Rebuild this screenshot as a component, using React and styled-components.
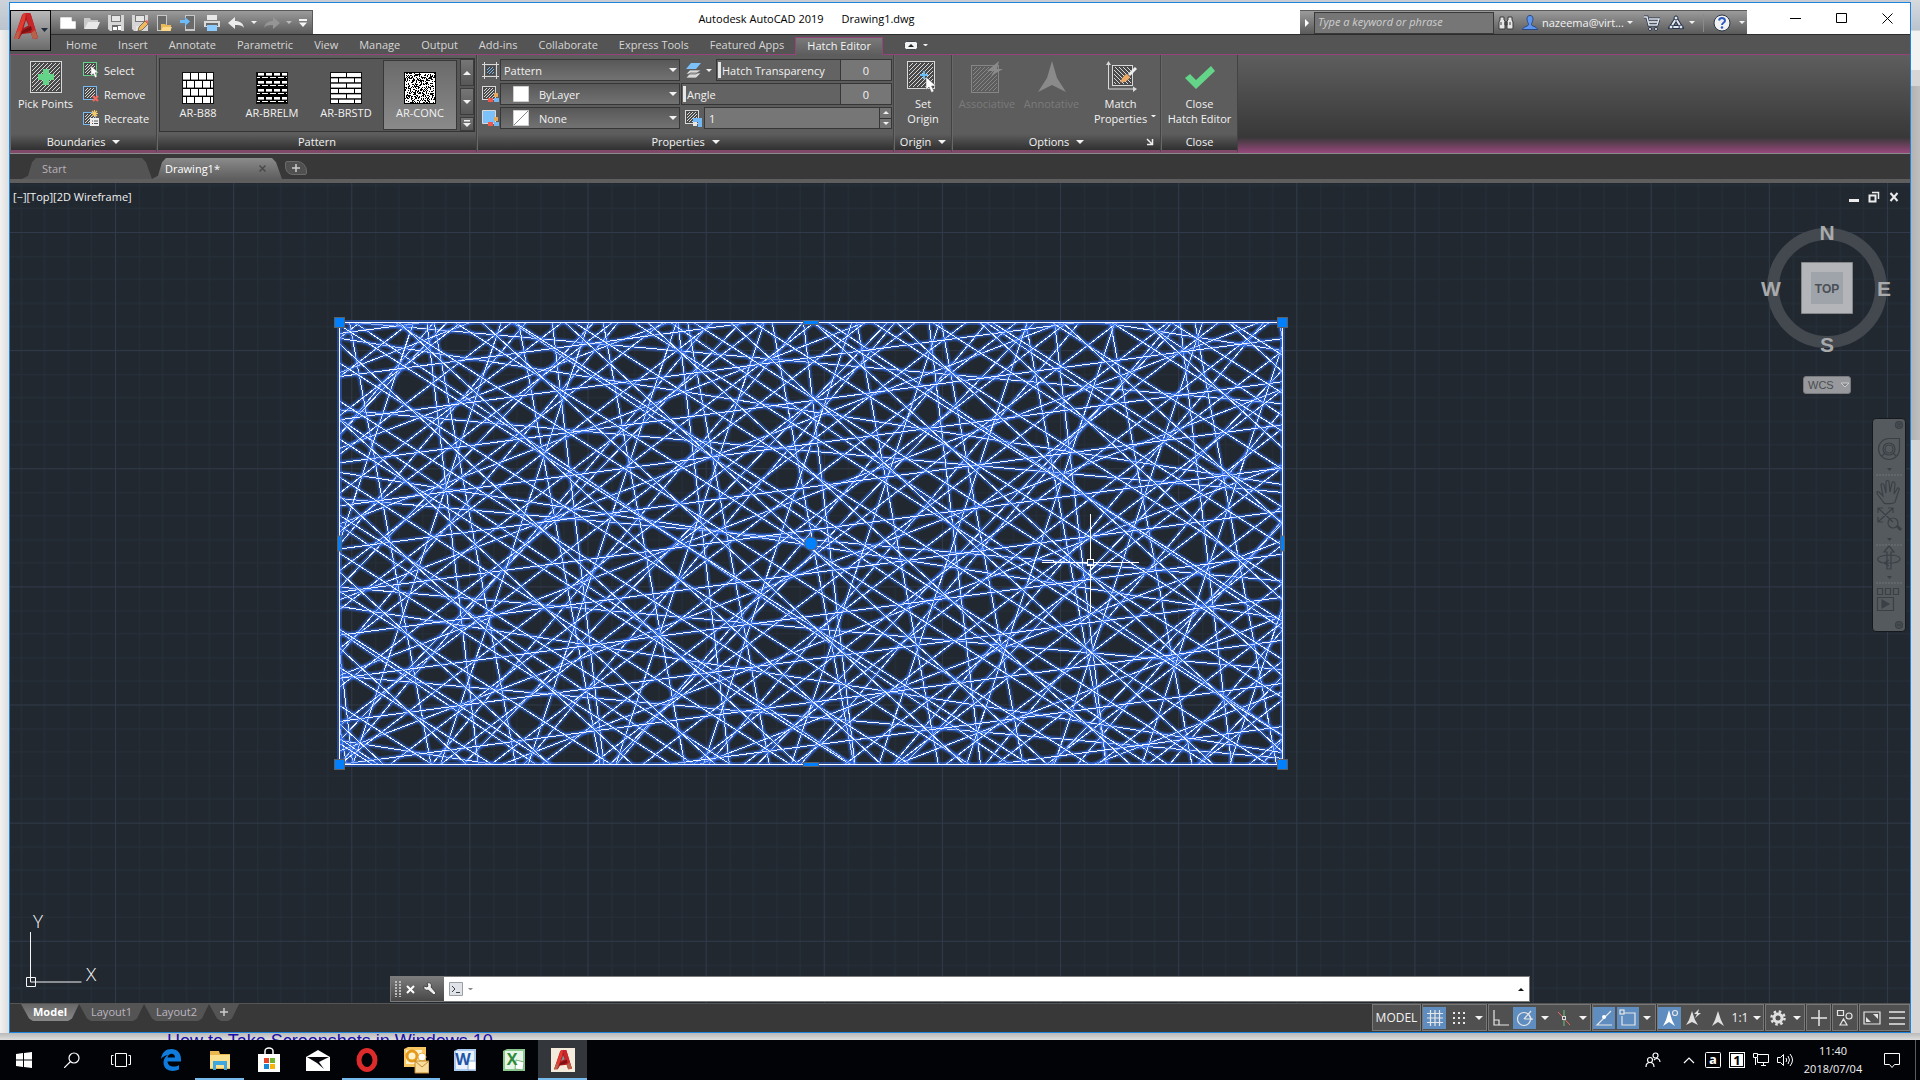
import React from 'react';
import styled, { createGlobalStyle, css } from 'styled-components';

const GlobalStyle = createGlobalStyle`
  * { box-sizing: border-box; }
  body {
    margin: 0;
    overflow: hidden;
    font-family: "Open Sans", "Noto Sans", sans-serif;
    font-size: 11px;
    line-height: 15px;
    color: #f2f2f2;
  }
  button, input, select {
    font: inherit;
    color: inherit;
    margin: 0;
    padding: 0;
    border: 0;
    border-radius: 0;
    background: none;
    outline: none;
  }
  a { color: inherit; text-decoration: none; }
  svg { display: block; flex: none; }
`;

/* ---------- shell ---------- */

const Desktop = styled.div`
  display: flex;
  flex-direction: column;
  height: 100vh;
  padding-top: 2px;
  background:
    linear-gradient(#cdd3d9, #b9c3ce) left top / 10px 30px no-repeat,
    linear-gradient(#d6dade, #b9c3ce) right top / 10px 30px no-repeat,
    linear-gradient(#f2f2f2, #f2f2f2) right 31px / 10px 39px no-repeat,
    linear-gradient(90deg, #b0b0b0, #c0bfc0) right 86px / 10px 354px no-repeat,
    linear-gradient(#c9cdd1, #c9cdd1) left top / 100% 2px no-repeat,
    linear-gradient(90deg, #f1f1f1, #dadada) left top / 10px 100% no-repeat,
    #d6d6d6;
`;

const Window = styled.main`
  display: flex;
  flex: 1;
  flex-direction: column;
  min-height: 0;
  margin: 0 9px;
  border: 1px solid #1c84dc;
  background: #383838;
`;

const PageBehind = styled.div`
  height: 7px;
  padding-left: 167px;
  overflow: hidden;
  background: linear-gradient(#b9b9b9, #dedede);
  font: 18px/20px "Liberation Sans", Arial, sans-serif;
  color: #1a0dab;

  a {
    display: block;
    margin-top: -2px;
  }
`;

/* ---------- title bar ---------- */

const TitleBar = styled.header`
  position: relative;
  display: flex;
  align-items: flex-end;
  height: 32px;
  padding-left: 41px;
  border-bottom: 1px solid #2c2c2c;
  background: #fff;
`;

const AppButton = styled.button`
  position: absolute;
  z-index: 2;
  top: 7px;
  left: 0;
  width: 41px;
  height: 41px;
  border: 1px solid #0a0a0a;
  background: linear-gradient(#b9b9b9, #6b6b6b);
`;

const ToolStrip = styled.div`
  display: flex;
  align-items: center;
  height: 24px;
  border-top: 1px solid #595959;
  background: linear-gradient(#9b9b9b, #5a5a5a);
`;

const QuickTools = styled(ToolStrip)`
  padding: 0 0 0 5px;
  border-right: 1px solid #595959;
`;

const ToolButton = styled.button`
  display: flex;
  align-items: center;
  justify-content: center;
  flex: none;
  width: ${({ $w }) => $w || 24}px;
  height: 100%;
`;

const Title = styled.h1`
  display: flex;
  flex: 1;
  align-self: center;
  justify-content: center;
  gap: 18px;
  margin: 0;
  font-size: 11px;
  font-weight: 400;
  color: #000;
`;

const SearchBox = styled.input`
  width: 180px;
  height: 22px;
  padding: 0 3px 2px;
  border: 1px solid #383838;
  background: #767676;

  &::placeholder {
    font-style: italic;
    color: #cfcfcf;
    opacity: 1;
  }
`;

const UserName = styled.button`
  display: flex;
  align-items: center;
  gap: 3px;
  width: 98px;
`;

const StripDivider = styled.span`
  width: 1px;
  height: 18px;
  margin: 0 3px 0 7px;
  background: #8a8a8a;
`;

const WindowButtons = styled.div`
  display: flex;
  height: 31px;
  margin-left: 26px;
`;

/* ---------- ribbon ---------- */

const RibbonTabs = styled.nav`
  display: flex;
  align-items: flex-end;
  gap: 1px;
  height: 20px;
  padding-left: 46px;
  border-bottom: 1px solid #96437b;
  background: #545454;
`;

const RibbonTab = styled.button`
  height: 18px;
  padding: 0 10px 2px;
  color: #d6d6d6;
  ${({ $active }) => $active && css`
    margin-bottom: -1px;
    padding: 0 11px 2px;
    border: 1px solid #96437b;
    border-bottom: 0;
    background: linear-gradient(#7a7a7a, #5d5d5d);
    color: #f5f5f5;
  `}
`;

const TabsToggle = styled.button`
  display: flex;
  align-items: center;
  gap: 5px;
  height: 18px;
  margin-left: 20px;
`;

const Ribbon = styled.section`
  display: flex;
  height: 99px;
  border-bottom: 1px solid #8b8b8b;
  background: linear-gradient(#5e5e5e, #383838 84%, #98487c);
`;

const PanelBox = styled.section`
  display: flex;
  flex: none;
  flex-direction: column;
  width: ${({ $w }) => $w}px;
  border-right: 1px solid #434343;
  border-left: 1px solid #686868;
  border-bottom: 3px solid #80496a;
  background: #5d5d5d;
`;

const PanelBody = styled.div`
  display: flex;
  flex: 1;
  min-height: 0;
`;

const PanelTitle = styled.h2`
  display: flex;
  height: 16px;
  margin: 0;
  padding-left: ${({ $launcher }) => ($launcher ? 16 : 0)}px;
  background: linear-gradient(#5d5d5d, #303030);
  font-size: 11px;
  font-weight: 400;
  line-height: 16px;

  span {
    display: flex;
    flex: 1;
    align-items: center;
    justify-content: center;
    gap: 7px;
    white-space: nowrap;
  }
`;

const BigButton = styled.button`
  display: flex;
  flex: none;
  flex-direction: column;
  align-items: center;
  gap: 3px;
  width: ${({ $w }) => $w}px;
  padding-top: 6px;
  white-space: nowrap;
  color: ${({ disabled }) => (disabled ? '#7b7b7b' : '#f2f2f2')};

  em {
    position: relative;
    font-style: normal;
  }

  em svg {
    position: absolute;
    right: -9px;
    bottom: 9px;
  }
`;

const SmallStack = styled.div`
  display: flex;
  flex-direction: column;
  padding: 3px 0 0 3px;
`;

const SmallButton = styled.button`
  display: flex;
  align-items: center;
  gap: 5px;
  height: 24px;
`;

const Gallery = styled.div`
  display: flex;
  flex: 1;
  height: 74px;
  margin: 3px 1px;
  padding: 1px;
  border: 1px solid #343434;
  background: #575757;
`;

const Swatch = styled.button`
  display: flex;
  flex-direction: column;
  align-items: center;
  gap: 1px;
  width: 74px;
  height: 70px;
  padding-top: 11px;
  border: 1px solid ${({ $active }) => ($active ? '#383838' : 'transparent')};
  background: ${({ $active }) => ($active ? 'linear-gradient(#6a6a6a, #8a8a8a)' : 'none')};
`;

const GalleryScroll = styled.div`
  display: grid;
  flex: 1;
  grid-template-rows: 27px 27px 1fr;
  gap: 2px;
  margin: -1px -1px -1px 3px;

  button {
    display: grid;
    place-items: center;
    border: 1px solid #3c3c3c;
    background: linear-gradient(#767676, #575757);
  }
`;

const Properties = styled.div`
  display: grid;
  grid-template-columns: 203px 211px;
  grid-template-rows: 23px 23px 23px;
  row-gap: 1px;
  padding-top: 4px;
`;

const Field = styled.div`
  display: flex;
  align-items: center;
  height: 22px;
  padding-left: 4px;
`;

const SelectBox = styled.label`
  position: relative;
  display: flex;
  align-items: center;
  width: 180px;
  height: 22px;
  margin-left: 1px;
  border: 1px solid #363636;
  background: linear-gradient(#585858, #727272);

  select {
    width: 100%;
    height: 100%;
    padding-left: ${({ $swatch }) => ($swatch ? 38 : 3)}px;
    appearance: none;
  }

  svg {
    position: absolute;
    pointer-events: none;
  }
`;

const SliderBox = styled.label`
  display: flex;
  flex: 1;
  align-items: center;
  height: 22px;
  padding-left: 1px;
  border: 1px solid #363636;
  background: #636363;
  white-space: nowrap;

  &::before {
    width: 3px;
    height: 16px;
    margin-right: 1px;
    background: #e6e6e6;
    content: '';
  }

  input {
    width: 51px;
    height: 20px;
    margin-left: auto;
    border-left: 1px solid #363636;
    background: #767676;
    text-align: center;
  }
`;

const ScaleBox = styled.label`
  display: flex;
  flex: 1;
  height: 22px;
  margin-left: 2px;
  border: 1px solid #363636;

  input {
    flex: 1;
    min-width: 0;
    padding-left: 4px;
    background: #767676;
  }
`;

const Spinner = styled.span`
  display: grid;
  width: 12px;
  gap: 1px;
  border-left: 1px solid #363636;
  background: #363636;

  button {
    display: grid;
    place-items: center;
    background: #747474;
  }
`;

/* ---------- file tabs and drawing ---------- */

const FileTabs = styled.nav`
  display: flex;
  align-items: flex-end;
  height: 29px;
  padding-left: 12px;
  border-bottom: 4px solid #5e5e5e;
  background: #383838;
`;

const FileTab = styled.button`
  display: flex;
  align-items: center;
  justify-content: space-between;
  width: 130px;
  height: 21px;
  padding: 0 16px 0 ${({ $active }) => ($active ? 13 : 20)}px;
  clip-path: polygon(0 100%, 6px 85%, 10px 20%, 14px 0, calc(100% - 10px) 0, calc(100% - 6px) 20%, 100% 100%);
  background: ${({ $active }) => ($active ? 'linear-gradient(#8b8b8b, #5e5e5e)' : '#545454')};
  color: ${({ $active }) => ($active ? '#fff' : '#b9b0b9')};
`;

const AddTab = styled.button`
  display: grid;
  place-items: center;
  width: 22px;
  height: 14px;
  margin: 0 0 4px 3px;
  border: 1px solid #6a6a6a;
  border-radius: 2px 10px 2px 8px;
  background: #505050;
`;

const Viewport = styled.section`
  position: relative;
  flex: 1;
  min-height: 0;
  overflow: hidden;
  background: #212830;
`;

const Canvas = styled.svg`
  position: absolute;
  inset: 0;
  width: 100%;
  height: 100%;
`;

const ViewLabel = styled.div`
  position: absolute;
  top: 6px;
  left: 3px;
`;

const ViewButtons = styled.div`
  position: absolute;
  top: 8px;
  right: 10px;
  display: flex;
  gap: 8px;
`;

const ViewCube = styled.div`
  position: absolute;
  top: 35px;
  right: 13px;
  display: flex;
  flex-direction: column;
  align-items: center;
  gap: 18px;
`;

const WcsButton = styled.button`
  display: flex;
  align-items: center;
  gap: 6px;
  width: 48px;
  height: 18px;
  padding-left: 4px;
  border: 1px solid #77797c;
  border-radius: 3px;
  background: #98999c;
  font: 11px/14px "Liberation Sans", Arial, sans-serif;
  color: #4a4d52;
`;

const NavBar = styled.nav`
  position: absolute;
  top: 235px;
  right: 4px;
  width: 34px;
  height: 214px;
  border: 1px solid #15191e;
  border-radius: 4px;
  background: #555a5e;
`;

const UcsIcon = styled.svg`
  position: absolute;
  bottom: 0;
  left: 0;
`;

const CommandLine = styled.div`
  position: absolute;
  bottom: 1px;
  left: 380px;
  display: flex;
  align-items: center;
  width: calc(100% - 760px);
  height: 26px;
  border: 1px solid #7a7a7a;
  background: #fff;

  > input {
    flex: 1;
    height: 24px;
    padding-left: 6px;
    color: #000;
  }
`;

const CommandTools = styled.div`
  display: flex;
  align-items: center;
  width: 53px;
  height: 24px;
  background: linear-gradient(#7c7c7c, #474747);
`;

/* ---------- bottom bar ---------- */

const BottomBar = styled.footer`
  display: flex;
  justify-content: space-between;
  height: 29px;
  border-top: 1px solid #555;
  background: #383838;
`;

const LayoutTabs = styled.nav`
  display: flex;
  padding-left: 11px;
`;

const LayoutTab = styled.button`
  width: ${({ $w }) => $w || 65}px;
  height: 17px;
  padding-bottom: 2px;
  clip-path: polygon(0 0, 100% 0, calc(100% - 7px) 85%, calc(100% - 11px) 100%, 12px 100%, 8px 85%);
  background: ${({ $active }) => ($active ? 'linear-gradient(#666, #888)' : '#545454')};
  color: ${({ $active }) => ($active ? '#fff' : '#bdb6c0')};
  font-weight: ${({ $active }) => ($active ? 700 : 400)};
`;

const StatusBar = styled.div`
  display: flex;
  gap: 1px;
  height: 27px;
`;

const StatusGroup = styled.div`
  display: flex;
  align-items: center;
  width: ${({ $w }) => $w}px;
  border: 1px solid #787878;
  background: #505050;
`;

const StatusButton = styled.button`
  display: flex;
  align-items: center;
  justify-content: center;
  flex: ${({ $w }) => ($w ? 'none' : 1)};
  width: ${({ $w }) => $w}px;
  height: 22px;
  font-size: 12px;
  white-space: nowrap;
  background: ${({ $on }) => ($on ? '#5f8dbf' : 'none')};
`;

const StatusGap = styled.span`
  flex: 1;
`;

/* ---------- taskbar ---------- */

const Taskbar = styled.footer`
  display: flex;
  justify-content: space-between;
  height: 40px;
  background: #010307;
`;

const TaskGroup = styled.div`
  display: flex;
  align-items: center;
`;

const TaskButton = styled.button`
  display: grid;
  place-items: center;
  width: ${({ $w }) => $w || 49}px;
  height: 40px;
  background: ${({ $active }) => ($active ? '#33363b' : 'none')};
  box-shadow: ${({ $open }) => ($open ? 'inset 0 -2px #76b9ed' : 'none')};
`;

const TrayButton = styled.button`
  display: grid;
  place-items: center;
  width: ${({ $w }) => $w || 24}px;
  height: 40px;
`;

const Clock = styled.time`
  width: 72px;
  font-size: 11px;
  line-height: 18px;
  text-align: center;
`;

const ShowDesktop = styled.button`
  width: 5px;
  height: 40px;
  border-left: 1px solid #5a5a5a;
`;

/* ---------- drawings ---------- */

const Svg = ({ w = 16, h = w, box, children, ...rest }) => (
  <svg width={w} height={h} viewBox={box || `0 0 ${w} ${h}`} fill="none" aria-hidden="true" {...rest}>
    {children}
  </svg>
);

const Caret = ({ w = 8, up, color = '#f2f2f2', ...rest }) => (
  <Svg w={w} h={w / 2} {...rest}>
    <path d={up ? `M0 ${w / 2}h${w}L${w / 2} 0z` : `M0 0h${w}L${w / 2} ${w / 2}z`} fill={color} />
  </Svg>
);

const FieldCaret = styled(Caret)`
  right: 2px;
`;

const FieldSwatch = styled(Svg)`
  left: 12px;
`;

const PlusMark = styled(Svg)`
  margin: auto;
`;

// 45 degree strokes inside a square, leaning "/" or, flipped, "\"
const diagonals = (x, y, size, step, flip) => {
  let d = '';
  for (let c = step; c < size * 2; c += step) {
    const a = Math.max(0, c - size);
    const b = Math.min(size, c);
    d += flip
      ? `M${x + size - a} ${y + c - a}L${x + size - b} ${y + c - b}`
      : `M${x + a} ${y + c - a}L${x + b} ${y + c - b}`;
  }
  return d;
};

const HatchBox = ({ x = 0, y = 0, size, step = 4, color = '#d9d9d9', frame = color, fill = '#4a4a4a', flip }) => (
  <g>
    <rect x={x + 0.5} y={y + 0.5} width={size - 1} height={size - 1} fill={fill} stroke={frame} />
    <path d={diagonals(x + 2, y + 2, size - 4, step, flip)} stroke={color} />
  </g>
);

const Pointer = ({ x, y, k = 1 }) => (
  <path
    transform={`translate(${x} ${y}) scale(${k})`}
    d="M0 0v13l3-3 2.500 5.500 2.500-1.200-2.500-5.300h4.500z"
    fill="#fff"
    stroke="#555"
    strokeWidth="0.500"
  />
);

const AutocadLogo = ({ w, h }) => (
  <Svg w={w} h={h} box="0 0 24 27">
    <path d="M0 26L8 2q1-2 4-2h3q2 0 2 2l7 23-5 1-2-6-9 1-3 5z" fill="#a81a1c" />
    <path d="M0 26L9 1l3-1-1 7-6 18z" fill="#e23b32" />
    <path d="M12 0h3q2 0 2 2l7 23-4 1-7-19z" fill="#c9262a" />
    <path d="M8 18l9-5 1 4-11 4z" fill="#7c1113" />
    <path d="M12 7l-2.500 8 5-2.500z" fill="#8e8e8e" />
    <path d="M0 26l3-7 3-1-2 8zM19 26l-2-6 4-3 3 8z" fill="#b5634a" />
  </Svg>
);

const quickIcons = {
  New: <path d="M0 2h12l4 4v8H0zM12 2v4h4" fill="#fff" stroke="#8a8a8a" strokeWidth="0.600" />,
  Open: (
    <g>
      <path d="M0 14V3h6l1 2h7v3H4z" fill="#c9c9c9" />
      <path d="M4 7h12l-3 7H0z" fill="#e8e8e8" />
    </g>
  ),
  Save: (
    <g>
      <path d="M0 0h16v16H2l-2-2z" fill="#d6d6d6" />
      <path d="M3 0h10v7H3z" fill="#777" />
      <path d="M4 1h8v5H4z" fill="#e6e6e6" />
      <path d="M4 10h9v6H4z" fill="#6a6a6a" />
      <path d="M5 12h4v3H5zM10 11h3v4h-3z" fill="#fff" />
    </g>
  ),
  'Save As': (
    <g>
      <path d="M0 0h16v16H2l-2-2z" fill="#d6d6d6" />
      <path d="M3 0h10v7H3z" fill="#777" />
      <path d="M4 1h8v5H4zM4 11h4v5H4z" fill="#e6e6e6" />
      <path d="M7 12l6-6 3 3-6 6-4 1z" fill="#efb95c" stroke="#4a4a4a" strokeWidth="0.700" />
      <path d="M13 6l2-1 2 2-1 2z" fill="#f0685e" />
    </g>
  ),
  'Open from Web & Mobile': (
    <g>
      <rect x="1.500" y="0.500" width="9" height="15" fill="#6a6a6a" stroke="#c8c8c8" />
      <path d="M5 9h4l1 1h5v6H5z" fill="#e9b95a" />
      <path d="M7 12h9l-2 4H5z" fill="#ffd98a" />
    </g>
  ),
  'Save to Web & Mobile': (
    <g>
      <rect x="5.500" y="0.500" width="9" height="15" fill="#6a6a6a" stroke="#c8c8c8" />
      <path d="M6 14h8v2H6z" fill="#c8c8c8" />
      <path d="M0 5h5V2l5 4.500L5 11V8H0z" fill="#6bbcf8" />
    </g>
  ),
  Plot: (
    <g>
      <path d="M3 0h10v5H3z" fill="#e8e8e8" />
      <path d="M0 6h16v6H0z" fill="#dadada" />
      <path d="M2 8h12v3H2z" fill="#6a6a6a" />
      <path d="M3 10h10v6H3z" fill="#8ccbff" />
    </g>
  ),
  Undo: <path d="M0 8l7-6v4c5 0 8 2 9 7-2-3-5-3-9-3v4z" fill="#ececec" />,
};

const StatusGlyph = ({ name }) => {
  const line = { stroke: '#e6e6e6', strokeWidth: 1.2 };
  switch (name) {
    case 'grid':
      return <Svg w={18}><path d="M4.500 1v16M9 1v16M13.500 1v16M1 4.500h16M1 9h16M1 13.500h16" {...line} /></Svg>;
    case 'snap':
      return <Svg w={16}><path d="M2 3h12M2 8h12M2 13h12" {...line} strokeWidth="2" strokeDasharray="2 3" /></Svg>;
    case 'ortho':
      return <Svg w={18}><path d="M2 1v15h15M2 11h5v5" {...line} /></Svg>;
    case 'polar':
      return <Svg w={18}><circle cx="8" cy="10" r="6.500" {...line} /><path d="M8 10h9M8 10l7-8M13 6l3 5" {...line} /></Svg>;
    case 'iso':
      return <Svg w={18}><path d="M9 1v16" stroke="#5fc878" /><path d="M3 3l12 13" stroke="#f06a6a" /><rect x="7.500" y="7.500" width="3" height="3" fill="#505050" stroke="#ddd" /></Svg>;
    case 'track':
      return <Svg w={18}><path d="M16 2L2 16h15" {...line} /><circle cx="9" cy="8" r="2" fill="#fff" /></Svg>;
    case 'osnap':
      return <Svg w={18}><path d="M5 4h11v12H3V7" {...line} /><rect x="1" y="1" width="4" height="4" fill="#5f8dbf" {...line} /></Svg>;
    case 'annoVisible':
      return <Svg w={18}><path d="M8 1l3 10 3 6-6-4-6 4 3-6z" fill="#fff" /><circle cx="14" cy="4" r="2.500" {...line} /></Svg>;
    case 'annoAuto':
      return <Svg w={18}><path d="M7 2l3 9 3 5-6-3-6 3 3-5z" fill="#e0e0e0" /><path d="M14 0l-5 5h3l-2 4 6-5h-3z" fill="#e0e0e0" /></Svg>;
    case 'anno':
      return <Svg w={14} h={16}><path d="M7 1l3 9 3 6-6-4-6 4 3-6z" fill="#e0e0e0" /></Svg>;
    case 'gear':
      return (
        <Svg w={16}>
          <circle cx="8" cy="8" r="4" stroke="#e0e0e0" strokeWidth="3" />
          <circle cx="8" cy="8" r="6.500" stroke="#e0e0e0" strokeWidth="2.500" strokeDasharray="2.500 2.600" />
        </Svg>
      );
    case 'plus':
      return <Svg w={18}><path d="M9 1v16M1 9h16" stroke="#e6e6e6" strokeWidth="1.500" /></Svg>;
    case 'shapes':
      return <Svg w={18}><path d="M1.500 1.500h6v5h-6zM4 16l3.500-6 3.500 6z" {...line} /><circle cx="13" cy="7" r="3" {...line} /></Svg>;
    case 'clean':
      return <Svg w={18}><path d="M1 3h16v12H1z" {...line} /><path d="M10 5h5v5zM3 8v5h5z" fill="#e6e6e6" /></Svg>;
    case 'menu':
      return <Svg w={18}><path d="M1 3h16M1 9h16M1 15h16" stroke="#e6e6e6" strokeWidth="1.500" /></Svg>;
    default:
      return <Caret w={8} />;
  }
};

const Bricks = ({ rows, cols, gap, dark }) => {
  const h = 32 / rows;
  const w = 32 / cols;
  const cells = [];
  for (let r = 0; r < rows; r += 1) {
    const shift = r % 2 ? w / 2 : 0;
    const rh = dark && r % 2 ? h * 0.6 : h;
    for (let c = -1; c <= cols; c += 1) {
      cells.push(
        <rect key={`${r}-${c}`} x={c * w + shift + gap} y={r * h + 1} width={w - gap} height={rh - 1.4} fill="#fff" />
      );
    }
  }
  return (
    <Svg w={32}>
      <rect width="32" height="32" fill="#000" />
      {cells}
      <rect x="0.500" y="0.500" width="31" height="31" stroke="#111" />
    </Svg>
  );
};

const Speckle = () => {
  let seed = 11;
  let d = '';
  for (let y = 1; y < 31; y += 1) {
    for (let x = 1; x < 31; x += 1) {
      seed = (seed * 1103515245 + 12345) % 2147483648;
      if ((seed >> 16) % 100 < 42) d += `M${x} ${y}h1v1h-1z`;
    }
  }
  return (
    <Svg w={32} shapeRendering="crispEdges">
      <rect width="32" height="32" fill="#000" />
      <rect x="1" y="1" width="30" height="30" fill="#fff" />
      <path d={d} fill="#000" />
    </Svg>
  );
};

/* ---------- the hatch itself ---------- */

const BOUNDS = { left: 329.5, top: 139.5, right: 1272.5, bottom: 581.5 };
const UNIT = 11.98; // pixels per pattern unit, measured from the lower left corner

// angle, base x, base y, distance between lines
const CONC = [
  [50, 0, 0, 5.89789472],
  [-5, 0, 0, 7.3723684],
  [100.4514446, 0.5977168, -0.0522934, 6.9397673],
  [46.1842, 0, 2, 8.84684208],
  [96.63555761, 0.88936745, 1.86206693, 10.40965104],
  [-8.81584, 0, 2, 11.0585526],
  [21, 1, 1.5, 5.89789472],
  [-34, 1, 1.5, 7.3723684],
  [71.45144474, 1.49742233, 1.16448394, 6.9397673],
  [37.5, 0, 0, 2.567],
  [7.5, 0, 0, 3.567],
  [-32.5, -2.23, 0, 2.678],
  [-42.5, -3.23, 0, 4.678],
];

const familyPath = ([angle, bx, by, gap]) => {
  const t = (angle * Math.PI) / 180;
  const dir = { x: Math.cos(t), y: Math.sin(t) };
  const normal = { x: -dir.y, y: dir.x };
  const corners = [
    [BOUNDS.left, BOUNDS.top],
    [BOUNDS.right, BOUNDS.top],
    [BOUNDS.left, BOUNDS.bottom],
    [BOUNDS.right, BOUNDS.bottom],
  ].map(([px, py]) => {
    const x = (px - BOUNDS.left) / UNIT - bx;
    const y = (BOUNDS.bottom - py) / UNIT - by;
    return (x * normal.x + y * normal.y) / gap;
  });
  let d = '';
  for (let k = Math.ceil(Math.min(...corners)); k <= Math.max(...corners); k += 1) {
    const x = bx + normal.x * gap * k;
    const y = by + normal.y * gap * k;
    const at = (s) => `${(BOUNDS.left + (x + dir.x * s) * UNIT).toFixed(1)} ${(BOUNDS.bottom - (y + dir.y * s) * UNIT).toFixed(1)}`;
    d += `M${at(-150)}L${at(150)}`;
  }
  return d;
};

const FAMILIES = CONC.map(familyPath);

const Drawing = () => {
  const { left, top, right, bottom } = BOUNDS;
  const frame = { x: left, y: top, width: right - left, height: bottom - top };
  const cx = (left + right) / 2;
  const cy = (top + bottom) / 2;
  const minor = [24, 47, 71, 94];
  const grip = { fill: '#0080ff', stroke: '#5b6068' };
  return (
    <Canvas aria-label="Drawing1">
      <defs>
        <pattern id="grid" x="105" y="49" width="118.130" height="118.130" patternUnits="userSpaceOnUse">
          {minor.map((m) => (
            <path key={m} d={`M${m + 0.5} 0V119M0 ${m + 0.5}H119`} stroke="#262f3a" />
          ))}
          <path d="M0.500 0V119M0 0.500H119" stroke="#313a4a" />
        </pattern>
        <clipPath id="bounds">
          <rect {...frame} />
        </clipPath>
      </defs>
      <rect width="100%" height="100%" fill="url(#grid)" />
      <g clipPath="url(#bounds)" fill="none">
        {FAMILIES.map((d) => (
          <g key={d}>
            <path d={d} stroke="#2f6cf0" strokeWidth="6" strokeOpacity="0.250" />
            <path d={d} stroke="#3573f6" strokeWidth="3" strokeOpacity="0.500" />
            <path d={d} stroke="#f2f6ff" strokeWidth="1" shapeRendering="crispEdges" />
          </g>
        ))}
      </g>
      <rect {...frame} fill="none" stroke="#2f6cf0" strokeWidth="5" strokeOpacity="0.500" />
      <rect {...frame} fill="none" stroke="#fff" />
      {[[left, top], [right, top], [left, bottom], [right, bottom]].map(([x, y]) => (
        <rect key={`${x}-${y}`} x={x - 5} y={y - 5} width="10" height="10" {...grip} />
      ))}
      {[top, bottom].map((y) => (
        <rect key={y} x={cx - 7.5} y={y - 2} width="15" height="4" {...grip} />
      ))}
      {[left, right].map((x) => (
        <rect key={x} x={x - 2} y={cy - 7.5} width="4" height="15" {...grip} />
      ))}
      <circle cx={cx} cy={cy} r="6.500" {...grip} />
      <path d="M1080.500 331v46M1080.500 383v46M1032 379.500h45M1084 379.500h45" stroke="#fff" />
      <rect x="1077.500" y="376.500" width="6" height="6" fill="none" stroke="#fff" />
    </Canvas>
  );
};

/* ---------- page parts ---------- */

const Panel = ({ w, title, menu, launcher, children }) => (
  <PanelBox $w={w}>
    <PanelBody>{children}</PanelBody>
    <PanelTitle $launcher={launcher}>
      <span>
        {title}
        {menu && <Caret w={8} />}
      </span>
      {launcher && (
        <Svg w={16}><path d="M3 5l5 5M8.500 5v5.500H3" stroke="#eee" strokeWidth="1.500" /></Svg>
      )}
    </PanelTitle>
  </PanelBox>
);

const tabs = ['Home', 'Insert', 'Annotate', 'Parametric', 'View', 'Manage', 'Output', 'Add-ins', 'Collaborate', 'Express Tools', 'Featured Apps', 'Hatch Editor'];

const statusGroups = [
  { w: 49, items: [{ text: 'MODEL' }] },
  { w: 65, items: [{ icon: 'grid', on: true, w: 23 }, { icon: 'snap', w: 26 }, { icon: 'more' }] },
  { w: 103, items: [{ icon: 'ortho', w: 24 }, { icon: 'polar', on: true, w: 23 }, { icon: 'more', w: 17 }, { icon: 'iso', w: 22 }, { icon: 'more' }] },
  { w: 64, items: [{ icon: 'track', on: true, w: 22 }, { icon: 'gap' }, { icon: 'osnap', on: true, w: 22 }, { icon: 'more', w: 16 }] },
  { w: 107, items: [{ icon: 'annoVisible', on: true, w: 23 }, { icon: 'annoAuto', w: 25 }, { icon: 'anno', w: 23 }, { text: '1:1', w: 22 }, { icon: 'more' }] },
  { w: 40, items: [{ icon: 'gear', w: 24 }, { icon: 'more' }] },
  { w: 25, items: [{ icon: 'plus' }] },
  { w: 26, items: [{ icon: 'shapes' }] },
  { w: 51, items: [{ icon: 'clean' }, { icon: 'menu' }] },
];

const TitleRow = () => (
  <TitleBar>
    <AppButton aria-label="Application menu">
      <Svg w={39} h={39}>
        <g transform="translate(3 2)"><AutocadLogo w={24} h={27} /></g>
        <path d="M30 17h7l-3.500 4z" fill="#1f2c3c" />
      </Svg>
    </AppButton>
    <QuickTools>
      {Object.entries(quickIcons).map(([name, art]) => (
        <ToolButton key={name} aria-label={name}>
          <Svg w={16}>{art}</Svg>
        </ToolButton>
      ))}
      <ToolButton $w={12} aria-label="Undo list"><Caret w={6} /></ToolButton>
      <ToolButton aria-label="Redo">
        <Svg w={16}><path d="M16 8L9 2v4C4 6 1 8 0 13c2-3 5-3 9-3v4z" fill="#959595" /></Svg>
      </ToolButton>
      <ToolButton $w={10} aria-label="Redo list"><Caret w={6} color="#bbb" /></ToolButton>
      <ToolButton $w={18} aria-label="Customize toolbar">
        <Svg w={10} h={8}><path d="M1 0h8v2H1zM1 3.500h8L5 8z" fill="#f5f5f5" /></Svg>
      </ToolButton>
    </QuickTools>
    <Title>
      <span>Autodesk AutoCAD 2019</span>
      <span>Drawing1.dwg</span>
    </Title>
    <ToolStrip>
      <ToolButton $w={14} aria-label="Collapse search">
        <Svg w={4} h={8}><path d="M0 0l4 4-4 4z" fill="#fff" /></Svg>
      </ToolButton>
      <SearchBox aria-label="Search" placeholder="Type a keyword or phrase" />
      <ToolButton aria-label="Find">
        <Svg w={16}>
          <path d="M2 2h4v3l1 1v8H1V7l1-2zM10 2h4v3l1 2v7H9V6l1-1z" fill="#e6e6e6" stroke="#3a3a3a" />
          <path d="M3 7v3M12 7v3M7 7h2v3H7z" stroke="#3a3a3a" />
        </Svg>
      </ToolButton>
      <ToolButton aria-label="Account">
        <Svg w={16}>
          <path d="M8 .500c3 0 3.500 3 2.500 6-.500 1.500-1 2-1 3 0 2 5 1.500 6 5H.500c1-3.500 6-3 6-5 0-1-.500-1.500-1-3-1-3-.500-6 2.500-6z" fill="#5c95f0" stroke="#27457f" />
        </Svg>
      </ToolButton>
      <UserName>nazeema@virt... <Caret w={6} /></UserName>
      <ToolButton aria-label="App store">
        <Svg w={16}>
          <path d="M0 2h3l2 8h8l2-6H5" stroke="#26324a" strokeWidth="3" />
          <path d="M0 2h3l2 8h8l2-6H5M5 7h9" stroke="#e3e8f0" strokeWidth="1.500" />
          <circle cx="6" cy="14" r="1.500" fill="#fff" stroke="#26324a" />
          <circle cx="12" cy="14" r="1.500" fill="#fff" stroke="#26324a" />
        </Svg>
      </ToolButton>
      <ToolButton aria-label="Stay connected">
        <Svg w={16}>
          <path d="M8 4l5 8H3z" stroke="#26324a" strokeWidth="4" />
          <path d="M8 4l5 8H3z" stroke="#e3e8f0" strokeWidth="2" />
          <g fill="#e3e8f0" stroke="#26324a"><circle cx="8" cy="3" r="2" /><circle cx="3" cy="12" r="2" /><circle cx="13" cy="12" r="2" /></g>
        </Svg>
      </ToolButton>
      <ToolButton $w={8} aria-label="Stay connected list"><Caret w={6} /></ToolButton>
      <StripDivider />
      <ToolButton $w={29} aria-label="Help">
        <Svg w={18}>
          <circle cx="9" cy="9" r="8" fill="#f1f1f1" stroke="#2b3442" />
          <path d="M6 6.500Q6.500 4 9 4t3 2.500C12 9 9 8.500 9 11" stroke="#2d5ac0" strokeWidth="2" />
          <circle cx="9" cy="13.500" r="1.300" fill="#2d5ac0" />
        </Svg>
      </ToolButton>
      <ToolButton $w={11} aria-label="Help list"><Caret w={6} /></ToolButton>
    </ToolStrip>
    <WindowButtons>
      <ToolButton $w={45} aria-label="Minimize"><Svg w={11}><path d="M0 5.500h11" stroke="#000" /></Svg></ToolButton>
      <ToolButton $w={46} aria-label="Maximize"><Svg w={11}><path d="M.5.500h10v9H.5z" stroke="#000" /></Svg></ToolButton>
      <ToolButton $w={46} aria-label="Close"><Svg w={11}><path d="M.5.500l10 10M10.500.500l-10 10" stroke="#000" /></Svg></ToolButton>
    </WindowButtons>
  </TitleBar>
);

const PropertiesPanel = () => (
  <Panel w={417} title="Properties" menu>
    <Properties>
      <Field>
        <Svg w={17}>
          <HatchBox x={3} y={3} size={11} step={3} color="#79b9f2" frame="#5d5d5d" />
          <path d="M0 2.500h17M0 14.500h17M2.500 0v17M14.500 0v17" stroke="#d9d9d9" />
        </Svg>
        <SelectBox>
          <select aria-label="Hatch type"><option>Pattern</option></select>
          <FieldCaret w={8} />
        </SelectBox>
      </Field>
      <Field>
        <Svg w={17}>
          <path d="M5 11h11l-5 5H1zM5 8h11l-5 4H1z" fill="#d9d9d9" stroke="#5d5d5d" strokeWidth="0.700" />
          <path d="M6 1h10l-5 6H1z" fill="#7cc1fa" />
        </Svg>
        <ToolButton $w={14} aria-label="Layers"><Caret w={6} /></ToolButton>
        <SliderBox>
          Hatch Transparency
          <input defaultValue="0" />
        </SliderBox>
      </Field>
      <Field>
        <Svg w={17}>
          <HatchBox size={14} step={3} />
          <path d="M12 7h4v4h-4z" fill="#e8a85a" />
          <path d="M6 12h5v4H6z" fill="#f0584e" />
          <path d="M12 12h5v4h-5z" fill="#72b8f5" />
        </Svg>
        <SelectBox $swatch>
          <select aria-label="Hatch color"><option>ByLayer</option></select>
          <FieldSwatch w={16}><path d="M.5.500h15v15H.5z" fill="#fff" stroke="#cfcfcf" /></FieldSwatch>
          <FieldCaret w={8} />
        </SelectBox>
      </Field>
      <SliderBox>
        Angle
        <input defaultValue="0" />
      </SliderBox>
      <Field>
        <Svg w={17}>
          <path d="M.500.500h13v13H.5z" fill="#7cc1fa" stroke="#d9d9d9" />
          <path d="M12 7h4v4h-4z" fill="#e8a85a" />
          <path d="M6 12h5v4H6z" fill="#f0584e" />
          <path d="M12 12h5v4h-5z" fill="#72b8f5" />
        </Svg>
        <SelectBox $swatch>
          <select aria-label="Background color"><option>None</option></select>
          <FieldSwatch w={16}>
            <path d="M.5.500h15v15H.5z" fill="#fff" stroke="#cfcfcf" />
            <path d="M1 15L15 1" stroke="#888" />
          </FieldSwatch>
          <FieldCaret w={8} />
        </SelectBox>
      </Field>
      <Field>
        <Svg w={17}>
          <HatchBox size={14} step={3} />
          <path d="M8 8h9v9h-4v-5H8z" fill="#72b8f5" />
          <path d="M8 12h4v4H8z" fill="#e6e6e6" />
        </Svg>
        <ScaleBox>
          <input aria-label="Hatch scale" defaultValue="1" />
          <Spinner>
            <button aria-label="Increase"><Caret w={6} up /></button>
            <button aria-label="Decrease"><Caret w={6} /></button>
          </Spinner>
        </ScaleBox>
      </Field>
    </Properties>
  </Panel>
);

const RibbonRow = () => (
  <Ribbon>
    <Panel w={147} title="Boundaries" menu>
      <BigButton $w={69}>
        <Svg w={32}>
          <HatchBox size={32} />
          <path d="M13 8h6v5h5v6h-5v5h-6v-5H8v-6h5z" fill="#64d489" />
        </Svg>
        Pick Points
      </BigButton>
      <SmallStack>
        <SmallButton>
          <Svg w={16}><HatchBox size={14} step={3} frame="#64d489" /><Pointer x={8} y={4} k={0.75} /></Svg>
          Select
        </SmallButton>
        <SmallButton>
          <Svg w={16}><HatchBox size={14} step={3} frame="#79b9f2" /><path d="M10 10l5 5M15 10l-5 5" stroke="#f0685e" strokeWidth="2.200" /></Svg>
          Remove
        </SmallButton>
        <SmallButton>
          <Svg w={16}>
            <HatchBox y={2} size={13} step={3} frame="#79b9f2" />
            <path d="M11.500 0v7M8 3.500h7M9 1l5 5M14 1L9 6" stroke="#f5c86a" strokeWidth="1.200" />
            <path d="M7 8h9v8H7z" fill="#ececec" />
            <path d="M9 11h1M11 11h4M9 13.500h1M11 13.500h4" stroke="#555" />
          </Svg>
          Recreate
        </SmallButton>
      </SmallStack>
    </Panel>
    <Panel w={320} title="Pattern">
      <Gallery>
        <Swatch><Bricks rows={4} cols={4} gap={1} />AR-B88</Swatch>
        <Swatch><Bricks rows={8} cols={4} gap={2} dark />AR-BRELM</Swatch>
        <Swatch><Bricks rows={6} cols={2} gap={1} />AR-BRSTD</Swatch>
        <Swatch $active><Speckle />AR-CONC</Swatch>
        <GalleryScroll>
          <button aria-label="Scroll up"><Caret w={8} up /></button>
          <button aria-label="Scroll down"><Caret w={8} /></button>
          <button aria-label="Expand gallery">
            <Svg w={8} h={8}><path d="M1 0h6v1.500H1zM0 3h8L4 7z" fill="#eee" /></Svg>
          </button>
        </GalleryScroll>
      </Gallery>
    </Panel>
    <PropertiesPanel />
    <Panel w={58} title="Origin" menu>
      <BigButton $w={56}>
        <Svg w={32}>
          <HatchBox size={28} />
          <path d="M17 10v8M13 14h8" stroke="#6cbcf5" strokeWidth="2" />
          <Pointer x={19} y={16} />
        </Svg>
        <em>Set<br />Origin</em>
      </BigButton>
    </Panel>
    <Panel w={209} title="Options" menu launcher>
      <BigButton $w={68} disabled>
        <Svg w={32}>
          <HatchBox y={4} size={28} color="#868686" fill="#5d5d5d" />
          <path d="M28 0L16 10h7l-3 5 12-7h-6z" fill="#8a8a8a" />
        </Svg>
        Associative
      </BigButton>
      <BigButton $w={61} disabled>
        <Svg w={32}><path d="M16 0l5 17 9 14-14-7-14 7 9-14z" fill="#8a8a8a" /></Svg>
        Annotative
      </BigButton>
      <BigButton $w={77}>
        <Svg w={32}>
          <path d="M3.500 2v26H30" stroke="#d9d9d9" />
          <path d="M1 4l2.500-4L6 4zM28 25.500l4 2.500-4 3z" fill="#d9d9d9" />
          <HatchBox x={7} y={4} size={21} flip />
          <path d="M15 21c2-2 3-7 7-8l3 3c-2 4-6 6-10 5z" fill="#eaa968" />
          <path d="M24 14l7-7" stroke="#eee" strokeWidth="3" />
        </Svg>
        <em>Match<br />Properties<Caret w={5} /></em>
      </BigButton>
    </Panel>
    <Panel w={77} title="Close">
      <BigButton $w={75}>
        <Svg w={32}><path d="M1 17l5-4 6 6L27 5l4 5-19 18z" fill="#64d489" /></Svg>
        <em>Close<br />Hatch Editor</em>
      </BigButton>
    </Panel>
  </Ribbon>
);

const Cube = () => (
  <ViewCube>
    <Svg w={140} h={140} fontFamily="Liberation Sans, Arial, sans-serif" fontWeight="700" textAnchor="middle">
      <circle cx="70" cy="70" r="54" stroke="#44494f" strokeWidth="12" />
      <g fontSize="21" fill="#a9aaac">
        <text x="70" y="22">N</text>
        <text x="70" y="134">S</text>
        <text x="14" y="78">W</text>
        <text x="127" y="78">E</text>
      </g>
      <path d="M44.500 44.500h51v51h-51z" fill="#b4b5b8" stroke="#85868a" />
      <path d="M54 54h32v32H54z" fill="#9fa4ab" />
      <text x="70" y="75" fontSize="12" fill="#4c4f55">TOP</text>
    </Svg>
    <WcsButton>
      WCS
      <Svg w={10} h={6}><path d="M1 1h8L5 5z" stroke="#c9cacc" fill="#83868c" /></Svg>
    </WcsButton>
  </ViewCube>
);

const Navigation = () => (
  <NavBar aria-label="Navigation bar">
    <Svg w={32} h={212} stroke="#3a4046" strokeWidth="1.200">
      <circle cx="26" cy="6" r="3.500" fill="#474c51" />
      <path d="M24.500 4.500l3 3M27.500 4.500l-3 3" />
      <path d="M16 19.500h10.500V30a10.500 10.500 0 1 1-10.500-10.500z" />
      <circle cx="16" cy="30" r="6" />
      <circle cx="16" cy="30" r="4" />
      <path d="M9 37l3-3M23 37l-3-3" />
      <path d="M14 49h5l-2.500 3zM14 119h5l-2.500 3zM14 157h5l-2.500 3z" fill="#3a4046" stroke="none" />
      <path d="M3 56h26M3 126h26M3 164h26" stroke="#7c8185" strokeDasharray="2 1" strokeWidth="0.700" />
      <path d="M11 84l-6-8c-2-3-1-4 1-3l4 4-2-11c0-2 2-2 3 0l2 8 0-11c0-2 3-2 3 0l1 10 2-9c1-2 3-1 3 1l-1 10 3-5c1-2 3-1 2 1l-4 12c-1 2-10 2-11 1z" />
      <path d="M5 89l15 14M20 89L5 103M5 94v-5h5M20 94v-5h-5M5 98v5h5" />
      <circle cx="20" cy="104" r="5" />
      <path d="M24 107l4 4" strokeWidth="3" />
      <path d="M14 150v-17h-3l5-6 5 6h-3v17z" />
      <path d="M10 144c-8-2-8-7 6-8 14 0 14 7 4 8h-8m4-3l-5 3 5 3" />
      <path d="M4.500 169.500h5v6h-5zM12.500 169.500h5v6h-5zM20.500 169.500h5v6h-5zM4.500 178.500h16v13h-16z" />
      <path d="M9 181v8l7-4z" fill="#3a4046" />
      <circle cx="26" cy="206" r="3.500" fill="#474c51" />
      <path d="M24 206h4" />
    </Svg>
  </NavBar>
);

const TaskIcon = ({ name }) => {
  switch (name) {
    case 'Start':
      return <Svg w={16}><path d="M0 2l7-1v6.500H0zM8 1l8-1v7.500H8zM0 8.500h7V15l-7-1zM8 8.500h8V16l-8-1z" fill="#fff" /></Svg>;
    case 'Search':
      return <Svg w={16}><circle cx="10" cy="6" r="5" stroke="#fff" strokeWidth="1.200" /><path d="M6.500 9.500L0 16" stroke="#fff" strokeWidth="1.200" /></Svg>;
    case 'Task View':
      return <Svg w={20} h={16}><path d="M4.500 1.500h11v13h-11zM2.500 3.500h-2v9h2M17.500 3.500h2v9h-2" stroke="#fff" /></Svg>;
    case 'Edge':
      return <Svg w={20} h={22}><path d="M0 10C1 3 5 0 10.500 0 16 0 20 4 20 10v2.500H6.500c.5 6 8 6 11.500 3.500v4.500C12 23.500 2.500 22 2.500 13.500 2.500 10 4.500 7.500 7 6 4 6.500 1.500 8 0 10zm6.500-1.500h7.500C14 3 7 4 6.500 8.500z" fill="#0f7bdc" /></Svg>;
    case 'File Explorer':
      return <Svg w={22} h={20}><path d="M1 1h9l1 3h10v15H1z" fill="#e9b94f" /><path d="M1 5h20v13H1z" fill="#fbe08f" /><path d="M4 11h14v9h-3v-5H7v5H4z" fill="#3fa7e0" /></Svg>;
    case 'Store':
      return <Svg w={22} h={26}><path d="M7 8V4a4 3 0 0 1 8 0v4" stroke="#fff" strokeWidth="1.500" /><path d="M0 7h22v18H0z" fill="#fff" /><path d="M6 11h5v5H6z" fill="#e8452c" /><path d="M12 11h5v5h-5z" fill="#6cb52d" /><path d="M6 17h5v5H6z" fill="#1a8ad6" /><path d="M12 17h5v5h-5z" fill="#f7b50c" /></Svg>;
    case 'Mail':
      return <Svg w={24} h={21}><path d="M0 7l12-7 12 7v14H0z" fill="#fff" /><path d="M1 7h22l-10 5 5 7-7-6z" fill="#05070b" /></Svg>;
    case 'Opera':
      return <Svg w={22} h={24}><ellipse cx="11" cy="12" rx="8" ry="9.500" stroke="#dd2a2a" strokeWidth="5" /></Svg>;
    case 'Outlook':
      return <Svg w={26} h={28}><path d="M1 3l4-2h18v20H1z" fill="#f7c764" /><path d="M3 4h16v14H3z" fill="#fff3cf" /><circle cx="9" cy="10" r="5" stroke="#e59a1c" strokeWidth="3" /><circle cx="19" cy="11" r="4" fill="#fff" stroke="#e8ae46" /><path d="M12 15h14v12H12z" fill="#f9dd9f" stroke="#c58a2d" /><path d="M12 15l7 6 7-6" stroke="#c58a2d" /></Svg>;
    case 'Word':
      return <Svg w={22} h={22}><path d="M0 2l4-2h18v22H0z" fill="#a9c9ee" /><path d="M2 2h18v18H2z" fill="#eaf3fd" /><path d="M14 12h8v9h-8z" fill="#fff" stroke="#89a8cf" /><text x="9" y="16" fontSize="16" fontWeight="700" textAnchor="middle" fill="#1f56a8">W</text></Svg>;
    case 'Excel':
      return <Svg w={22} h={22}><path d="M0 2l4-2h18v22H0z" fill="#8ac88f" /><path d="M2 2h18v18H2z" fill="#e6f5e6" /><path d="M13 11l8 2-1 8-8-1z" fill="#fff" stroke="#7ab27a" /><text x="9" y="16" fontSize="16" fontWeight="700" textAnchor="middle" fill="#2f8a3c">X</text></Svg>;
    default:
      return <Svg w={24}><path d="M0 0h24v24H0z" fill="#f3ebdc" /><g transform="translate(3 2)"><AutocadLogo w={18} h={20} /></g></Svg>;
  }
};

const tasks = [
  { name: 'Start', w: 48 },
  { name: 'Search', w: 48 },
  { name: 'Task View', w: 50 },
  { name: 'Edge' },
  { name: 'File Explorer', open: true },
  { name: 'Store' },
  { name: 'Mail' },
  { name: 'Opera', open: true },
  { name: 'Outlook', open: true },
  { name: 'Word' },
  { name: 'Excel' },
  { name: 'AutoCAD', open: true, active: true },
];

const App = () => (
  <Desktop>
    <GlobalStyle />
    <Window>
      <TitleRow />
      <RibbonTabs>
        {tabs.map((name) => (
          <RibbonTab key={name} $active={name === 'Hatch Editor'}>{name}</RibbonTab>
        ))}
        <TabsToggle aria-label="Minimize ribbon">
          <Svg w={14} h={9}>
            <rect x="0.500" y="0.500" width="13" height="8" rx="2" fill="#f2f2f2" stroke="#3f464e" />
            <path d="M4 6h6L7 3z" fill="#222" />
          </Svg>
          <Caret w={5} />
        </TabsToggle>
      </RibbonTabs>
      <RibbonRow />
      <FileTabs>
        <FileTab>Start</FileTab>
        <FileTab $active>
          Drawing1*
          <Svg w={7}><path d="M.5.500l6 6M6.500.500l-6 6" stroke="#4a4a4a" strokeWidth="1.500" /></Svg>
        </FileTab>
        <AddTab aria-label="New drawing"><Svg w={8}><path d="M4 0v8M0 4h8" stroke="#ccc" strokeWidth="1.500" /></Svg></AddTab>
      </FileTabs>
      <Viewport>
        <Drawing />
        <ViewLabel>[−][Top][2D Wireframe]</ViewLabel>
        <ViewButtons>
          <button aria-label="Minimize drawing"><Svg w={12}><path d="M1 8h10v3H1z" fill="#ececec" /></Svg></button>
          <button aria-label="Restore drawing"><Svg w={12}><path d="M1.500 4.500h6v6h-6z" stroke="#ececec" strokeWidth="2" /><path d="M4 1.500h6.500V8" stroke="#ececec" strokeWidth="1.500" /></Svg></button>
          <button aria-label="Close drawing"><Svg w={12}><path d="M2.500 2l7 8M9.500 2l-7 8" stroke="#ececec" strokeWidth="2" /></Svg></button>
        </ViewButtons>
        <Cube />
        <Navigation />
        <UcsIcon width="100" height="100" fill="none" stroke="#f5f5f5">
          <path d="M20.500 29v50h51" />
          <path d="M16.500 74.500h9v9h-9z" />
          <g stroke="none" fill="#f5f5f5" fontSize="19" fontWeight="300" textAnchor="middle">
            <text x="28" y="25">Y</text>
            <text x="81" y="78">X</text>
          </g>
        </UcsIcon>
        <CommandLine>
          <CommandTools>
            <Svg w={14} h={18}><path d="M5 1v16M9 1v16" stroke="#bbb" strokeWidth="2" strokeDasharray="2 1" /></Svg>
            <ToolButton $w={10} aria-label="Close command line"><Svg w={9}><path d="M1 1l7 7M8 1L1 8" stroke="#fff" strokeWidth="2" /></Svg></ToolButton>
            <ToolButton $w={29} aria-label="Customize">
              <Svg w={14}><path d="M1 4l3 1 1-1-1-3c4-1 5 2 4 4l5 6-2 2-6-5C3 9 0 7 1 4z" fill="#eee" stroke="#222" strokeWidth="0.700" /></Svg>
            </ToolButton>
          </CommandTools>
          <ToolButton aria-label="Recent commands">
            <Svg w={14}><path d="M.5.500h13v13H.5z" fill="#dfe3e8" stroke="#9a9fa6" /><path d="M3 4l3 3-3 3M7 10.500h4" stroke="#3a4048" /></Svg>
          </ToolButton>
          <Caret w={5} color="#8a8a8a" />
          <input aria-label="Command" />
          <ToolButton $w={16} aria-label="Command history"><Caret w={6} up color="#111" /></ToolButton>
        </CommandLine>
      </Viewport>
      <BottomBar>
        <LayoutTabs>
          <LayoutTab $w={58} $active>Model</LayoutTab>
          <LayoutTab>Layout1</LayoutTab>
          <LayoutTab>Layout2</LayoutTab>
          <LayoutTab $w={30} aria-label="New layout">
            <PlusMark w={8}><path d="M4 0v8M0 4h8" stroke="#ccc" strokeWidth="1.500" /></PlusMark>
          </LayoutTab>
        </LayoutTabs>
        <StatusBar>
          {statusGroups.map((group, i) => (
            <StatusGroup key={i} $w={group.w}>
              {group.items.map((item, j) => (
                item.icon === 'gap'
                  ? <StatusGap key={j} />
                  : (
                    <StatusButton key={j} $w={item.w} $on={item.on} aria-label={item.icon}>
                      {item.text || <StatusGlyph name={item.icon} />}
                    </StatusButton>
                  )
              ))}
            </StatusGroup>
          ))}
        </StatusBar>
      </BottomBar>
    </Window>
    <PageBehind><a href="#screenshots">How to Take Screenshots in Windows 10</a></PageBehind>
    <Taskbar>
      <TaskGroup>
        {tasks.map(({ name, w, open, active }) => (
          <TaskButton key={name} $w={w} $open={open} $active={active} aria-label={name}>
            <TaskIcon name={name} />
          </TaskButton>
        ))}
      </TaskGroup>
      <TaskGroup>
        <TrayButton $w={48} aria-label="People">
          <Svg w={16}><g stroke="#fff" strokeWidth="1.200"><circle cx="10.500" cy="3.500" r="2.500" /><circle cx="5" cy="8" r="2.500" /><path d="M1 15c0-6 8-6 8 0M9 8c3-3 6-1 6 2" /></g></Svg>
        </TrayButton>
        <TrayButton aria-label="Show hidden icons"><Svg w={12} h={8}><path d="M1 7l5-5 5 5" stroke="#fff" strokeWidth="1.200" /></Svg></TrayButton>
        <TrayButton aria-label="Keyboard">
          <Svg w={16}><rect x="0.500" y="0.500" width="15" height="15" rx="1" stroke="#fff" /><text x="8" y="12" fontSize="13" fontWeight="700" textAnchor="middle" fill="#fff">a</text></Svg>
        </TrayButton>
        <TrayButton aria-label="Caps">
          <Svg w={16}><rect x="0.500" y="0.500" width="15" height="15" stroke="#fff" /><path d="M2 2h12v12H2z" fill="#fff" /><text x="8" y="13" fontSize="13" fontWeight="700" textAnchor="middle" fill="#000">1</text></Svg>
        </TrayButton>
        <TrayButton aria-label="Network"><Svg w={16}><path d="M5 2.500h10.500v8H4.500V6M8 13.500h5M10.500 11v2.500M.5 1.500h4v4h-4zM2.500 6v7" stroke="#fff" /></Svg></TrayButton>
        <TrayButton aria-label="Volume"><Svg w={17} h={16}><path d="M.5 5.500h3l3-3v11l-3-3h-3zM9 6q1.500 2 0 4M11 4q3 4 0 8M13 2q5 6 0 12" stroke="#fff" /></Svg></TrayButton>
        <Clock>11:40<br />2018/07/04</Clock>
        <TrayButton $w={46} aria-label="Notifications"><Svg w={16}><path d="M.5 1.500h15v11h-5l-2.500 3-2.500-3h-5z" stroke="#fff" /></Svg></TrayButton>
        <ShowDesktop aria-label="Show desktop" />
      </TaskGroup>
    </Taskbar>
  </Desktop>
);

export default App;
